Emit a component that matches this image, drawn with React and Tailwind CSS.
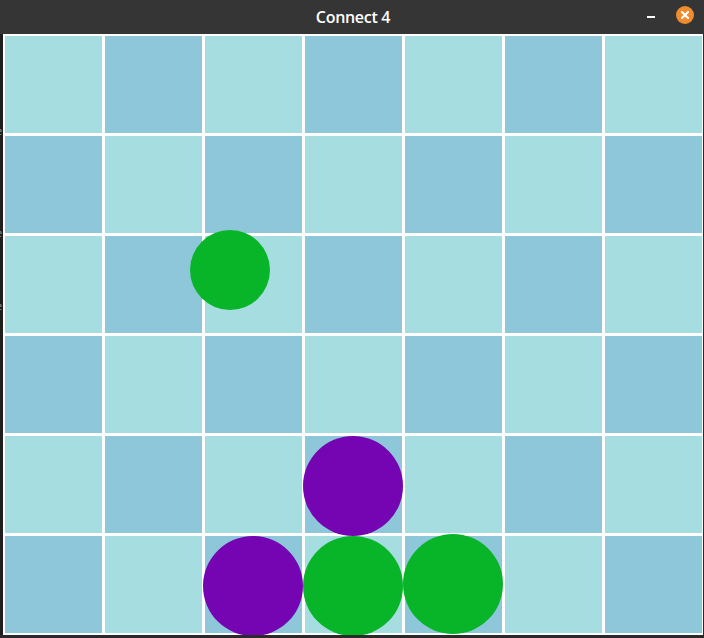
import React from "react";

const COLS = 7;
const ROWS = 6;

// pieces: left/top relative to the board, size in px
const pieces = [
    { left: 187, top: 196, size: 80, color: "bg-[#08b529]" },
    { left: 300, top: 402, size: 100, color: "bg-[#7504b2]" },
    { left: 200, top: 502, size: 100, color: "bg-[#7504b2]" },
    { left: 300, top: 502, size: 100, color: "bg-[#08b529]" },
    { left: 400, top: 500, size: 100, color: "bg-[#08b529]" },
];

function Cell({ dark }) {
    return <div className={dark ? "bg-[#8ec7da]" : "bg-[#a6dde1]"} />;
}

export default function App() {
    const cells = [];
    for (let r = 0; r < ROWS; r++) {
        for (let c = 0; c < COLS; c++) {
            cells.push(<Cell key={`${r}-${c}`} dark={(r + c) % 2 === 1} />);
        }
    }

    return (
        <div className="w-[704px] h-[638px] bg-[#2a2a2a] flex flex-col overflow-hidden" style={{ fontFamily: "'Open Sans', 'Noto Sans', sans-serif" }}>

            {/* Title bar */}
            <div className="h-[34px] bg-[#353535] flex items-center relative shrink-0">
                <div className="flex-1 text-center text-white font-semibold text-[16px] tracking-[-0.3px] leading-none pl-[2px] pb-[1px]">Connect 4</div>
                <div className="absolute right-[10px] top-[6px] flex items-center gap-[21px]">
                    <div className="w-[8px] h-[2px] bg-white mt-[4px]" />
                    <div className="w-[18px] h-[18px] rounded-full bg-[#f08c2e] flex items-center justify-center">
                        <svg width="8" height="8" viewBox="0 0 8 8">
                            <path d="M1 1 L7 7 M7 1 L1 7" stroke="white" strokeWidth="2" strokeLinecap="square" />
                        </svg>
                    </div>
                </div>
            </div>

            <div className="flex">
                {/* window behind, peeking at the left edge */}
                <div className="w-[3px] bg-[#1f1f1f] text-[#9a9a9a] text-[11px] leading-none overflow-hidden flex flex-col">
                    <span className="mt-[91px] -ml-[4px]">e</span>
                    <span className="mt-[91px] -ml-[4px]">e</span>
                    <span className="mt-[62px] -ml-[4px]">e</span>
                </div>

                {/* Board */}
                <div className="relative w-[700px] h-[601px] bg-white overflow-hidden pt-[2px] pl-[2px]">
                    <div className="grid grid-cols-[repeat(7,97px)] grid-rows-[repeat(6,97px)] gap-[3px]">
                        {cells}
                    </div>
                    {pieces.map((p, i) => (
                        <div
                            key={i}
                            className={`absolute rounded-full ${p.color}`}
                            style={{ left: p.left, top: p.top, width: p.size, height: p.size }}
                        />
                    ))}
                </div>
            </div>
        </div>
    );
}
